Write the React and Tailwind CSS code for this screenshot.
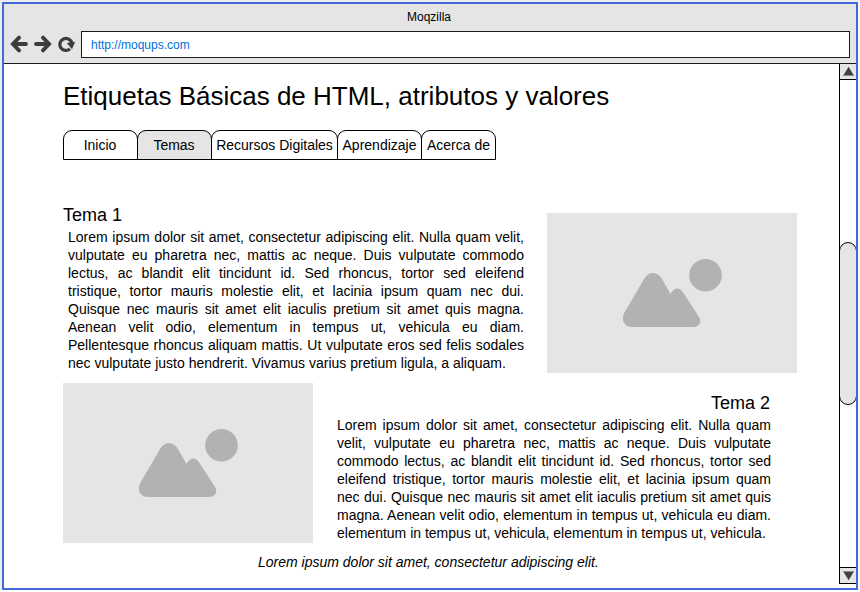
const LEFT = [
  'Lorem ipsum dolor sit amet, consectetur adipiscing elit. Nulla quam velit,',
  'vulputate eu pharetra nec, mattis ac neque. Duis vulputate commodo',
  'lectus, ac blandit elit tincidunt id. Sed rhoncus, tortor sed eleifend',
  'tristique, tortor mauris molestie elit, et lacinia ipsum quam nec dui.',
  'Quisque nec mauris sit amet elit iaculis pretium sit amet quis magna.',
  'Aenean velit odio, elementum in tempus ut, vehicula eu diam.',
  'Pellentesque rhoncus aliquam mattis. Ut vulputate eros sed felis sodales',
  'nec vulputate justo hendrerit. Vivamus varius pretium ligula, a aliquam.',
];

const RIGHT = [
  'Lorem ipsum dolor sit amet, consectetur adipiscing elit. Nulla quam',
  'velit, vulputate eu pharetra nec, mattis ac neque. Duis vulputate',
  'commodo lectus, ac blandit elit tincidunt id. Sed rhoncus, tortor sed',
  'eleifend tristique, tortor mauris molestie elit, et lacinia ipsum quam',
  'nec dui. Quisque nec mauris sit amet elit iaculis pretium sit amet quis',
  'magna. Aenean velit odio, elementum in tempus ut, vehicula eu diam.',
  'elementum in tempus ut, vehicula, elementum in tempus ut, vehicula.',
];

const TABS = [
  { label: 'Inicio', width: 'w-[75px] pr-px' },
  { label: 'Temas', width: 'w-[75px] pr-px', active: true },
  { label: 'Recursos Digitales', width: 'w-[127px]' },
  { label: 'Aprendizaje', width: 'w-[85px]' },
  { label: 'Acerca de', width: 'w-[75px]' },
];

function Paragraph({ lines, className }) {
  return (
    <div className={`text-sm leading-[18px] ${className}`}>
      {lines.map((line, i) => (
        <p
          key={line}
          className={i < lines.length - 1 ? 'text-justify [text-align-last:justify]' : 'whitespace-nowrap'}
        >
          {line}
        </p>
      ))}
    </div>
  );
}

function Picture({ className = '' }) {
  return (
    <div className={`h-[160px] w-[250px] shrink-0 bg-[#e5e5e5] ${className}`}>
      <svg width="250" height="160" viewBox="0 0 250 160" fill="#b2b2b2">
        <circle cx="158.5" cy="62.3" r="16.3" />
        <path d="M85 114 C77 114 73.500 106.500 77.500 99.500 L96.500 67 C101 58 110 57.500 115 66 L123.500 81 C127.500 74 132.500 74 136.500 80 L152 104 C155.500 109.500 151.500 114 146.500 114 Z" />
      </svg>
    </div>
  );
}

function Arrow({ className = '' }) {
  return (
    <svg
      width="18"
      height="18"
      viewBox="0 0 18 18"
      fill="none"
      stroke="#3d3d3d"
      strokeWidth="3.8"
      strokeLinecap="round"
      className={className}
    >
      <path d="M16 9 H4" />
      <path d="M9 2.600 L2.900 9 L9 15.400" />
    </svg>
  );
}

export default function App() {
  return (
    <div className="h-[592px] w-[860px] overflow-hidden border-2 border-[#ededed] border-r-[#f8f8f8] border-b-white font-['Liberation_Sans',Arial,sans-serif] text-black">
      <div className="flex h-[588px] w-[856px] flex-col overflow-hidden border-2 border-[#4169d8] bg-white">
        <header className="h-[60px] shrink-0 border-b border-[#1a1a1a] bg-[#e5e5e5]">
          <div className="h-[27px] pt-[4px] pr-[2px] text-center text-xs leading-[18px]">Moqzilla</div>
          <div className="flex">
            <div className="flex h-[27px] w-[77px] items-center pb-px pl-[6px]">
              <Arrow />
              <Arrow className="ml-[6px] rotate-180" />
              <svg width="18" height="18" viewBox="0 0 18 18" className="ml-[6px]">
                <path
                  d="M12 13.800 A6 6 0 1 1 13.700 8"
                  fill="none"
                  stroke="#3d3d3d"
                  strokeWidth="3.200"
                />
                <path d="M8.800 8 L17.200 6.800 L14 14.200 Z" fill="#3d3d3d" />
              </svg>
            </div>
            <div className="flex h-[27px] w-[769px] items-center border border-[#1a1a1a] bg-white pl-[9px] text-xs text-[#0070e0]">
              http://moqups.com
            </div>
          </div>
        </header>

        <div className="flex min-h-0 flex-1">
          <main className="w-[835px] shrink-0 pl-[59px]">
            <h1 className="mt-[16px] h-[50px] text-[26px] leading-[32px]">
              Etiquetas Básicas de HTML, atributos y valores
            </h1>
            <nav className="flex h-[30px]">
              {TABS.map((tab) => (
                <div
                  key={tab.label}
                  className={`-mr-px flex h-[30px] items-center justify-center whitespace-nowrap rounded-t-[9px] border border-black text-sm ${tab.width} ${tab.active ? 'bg-[#e5e5e5]' : 'bg-white'}`}
                >
                  {tab.label}
                </div>
              ))}
            </nav>

            <section className="mt-[45px] flex h-[168px]">
              <div className="w-[484px] shrink-0">
                <h2 className="h-[23px] text-lg leading-[20px]">Tema 1</h2>
                <Paragraph lines={LEFT} className="ml-[5px] w-[456px]" />
              </div>
              <Picture className="mt-[8px]" />
            </section>

            <section className="mt-[10px] flex h-[160px]">
              <Picture />
              <div className="ml-[24px] w-[434px] pt-[10px]">
                <h2 className="h-[23px] pr-px text-right text-lg leading-[20px]">Tema 2</h2>
                <Paragraph lines={RIGHT} className="w-[434px]" />
              </div>
            </section>

            <p className="ml-[195px] mt-[10px] text-sm leading-[18px] italic">
              Lorem ipsum dolor sit amet, consectetur adipiscing elit.
            </p>
          </main>

          <aside className="flex h-[520px] w-[17px] flex-col overflow-hidden border-b border-l border-black">
            <div className="h-[16px] shrink-0 border-b border-black bg-[#e5e5e5]">
              <svg width="16" height="15" viewBox="0 0 16 15">
                <path d="M3 12 L8.600 2.800 L14.200 12 Z" fill="#404040" />
                <path d="M3 11.500 H14" stroke="#8a8a8a" />
              </svg>
            </div>
            <div className="-ml-px mt-[162px] h-[163px] w-[18px] shrink-0 rounded-full border border-black bg-[#e5e5e5]" />
            <div className="mt-auto h-[16px] shrink-0 border-t border-black bg-[#e5e5e5]">
              <svg width="16" height="15" viewBox="0 0 16 15">
                <path d="M3 3 L8.600 12.200 L14.200 3 Z" fill="#404040" />
                <path d="M3 3.500 H14" stroke="#8a8a8a" />
              </svg>
            </div>
          </aside>
        </div>
      </div>
    </div>
  );
}
